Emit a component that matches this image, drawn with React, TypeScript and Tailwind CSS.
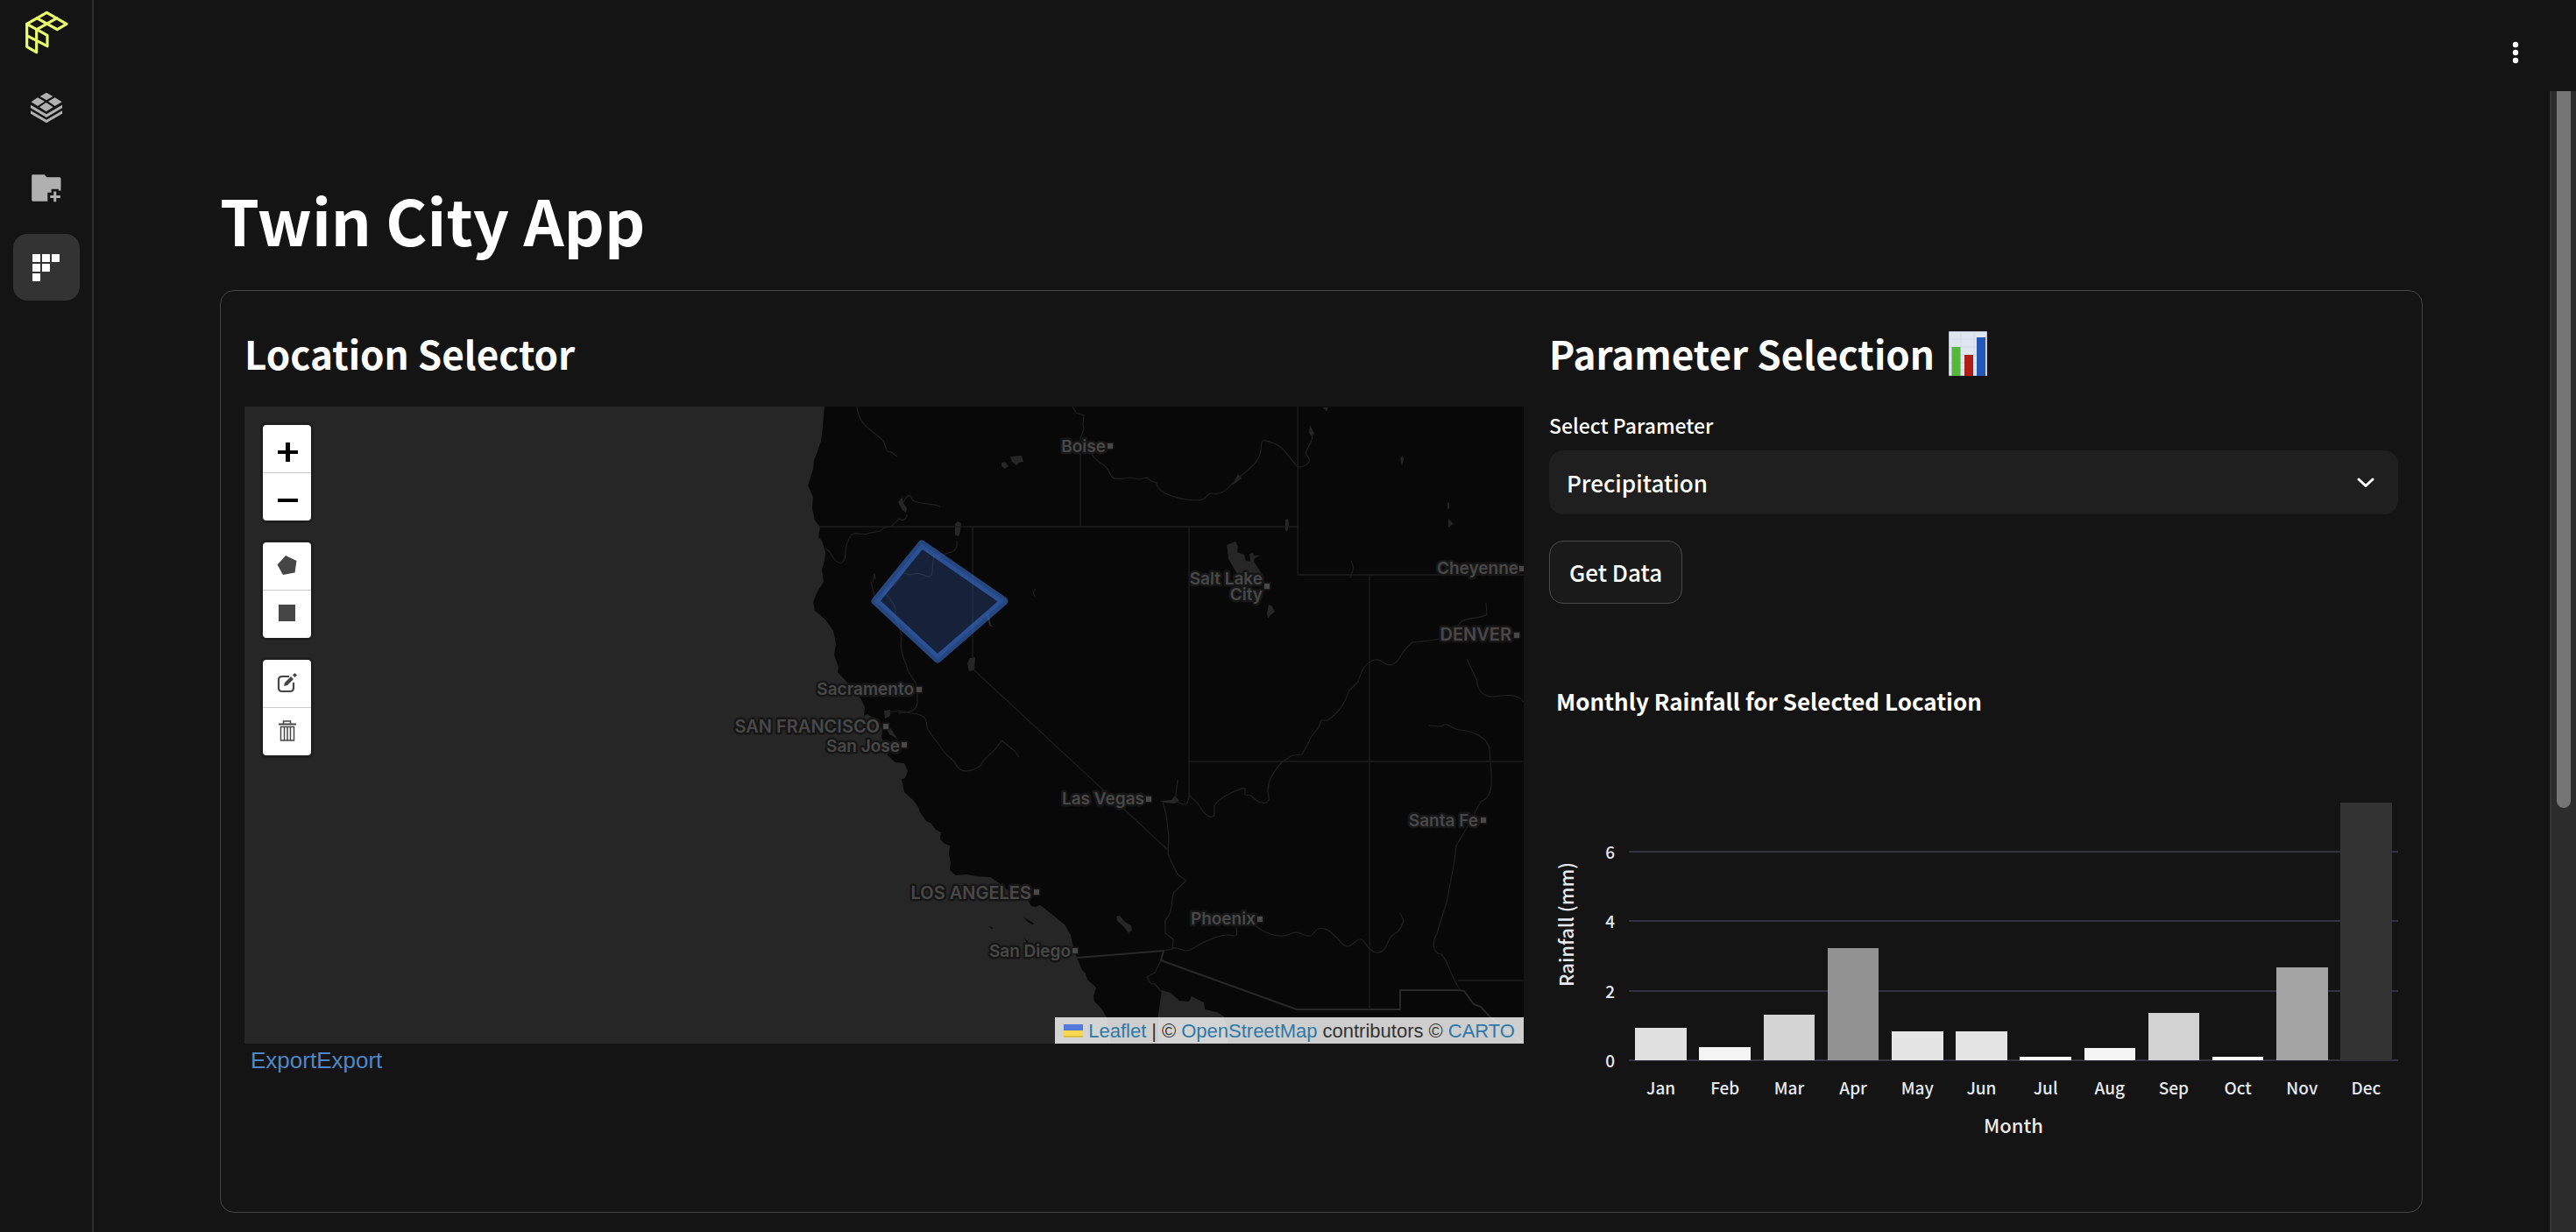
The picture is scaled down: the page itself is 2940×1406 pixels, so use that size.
import { useId, useState } from "react";

type Rain = { month: string; mm: number; fill: string };

const RAINFALL: Rain[] = [
  { month: "Jan", mm: 0.92, fill: "bg-[#e1e1e1]" },
  { month: "Feb", mm: 0.39, fill: "bg-[#f5f5f5]" },
  { month: "Mar", mm: 1.31, fill: "bg-[#d4d4d4]" },
  { month: "Apr", mm: 3.22, fill: "bg-[#929292]" },
  { month: "May", mm: 0.82, fill: "bg-[#e5e5e5]" },
  { month: "Jun", mm: 0.84, fill: "bg-[#e4e4e4]" },
  { month: "Jul", mm: 0.1, fill: "bg-[#fdfdfd]" },
  { month: "Aug", mm: 0.36, fill: "bg-[#f5f5f5]" },
  { month: "Sep", mm: 1.35, fill: "bg-[#d2d2d2]" },
  { month: "Oct", mm: 0.1, fill: "bg-[#fdfdfd]" },
  { month: "Nov", mm: 2.68, fill: "bg-[#a4a4a4]" },
  { month: "Dec", mm: 7.4, fill: "bg-[#333333]" },
];
const AXIS_MAX = 7.5;
const TICKS = [0, 2, 4, 6];
const percent = (mm: number) => `${(mm / AXIS_MAX) * 100}%`;

/* ---------- Sidebar ---------- */

function Logo() {
  return (
    <svg viewBox="84 36 150 150" className="size-[50px]" fill="none" stroke="#e8ff6b" strokeWidth="9.500" strokeLinejoin="round" strokeLinecap="round">
      <path d="M92 82 160 43 228 82 196 101 126 62M92 82 126 101 195 62" />
      <path d="M92 82V160L125 179V101M92 122 162 158V121L126 101" />
    </svg>
  );
}

function LayersIcon() {
  return (
    <svg viewBox="102 318 114 108" className="h-9 w-[38px]" fill="#b0b0b0">
      <path d="M159 320 181 333 159 346 137 333ZM129 337 153 350 129 366 107 352ZM188 337 212 352 188 366 165 350ZM158 354 182 370 158 385 135 370Z" />
      <path d="M105 362 159 394 213 362V373L159 405 105 373Z" />
      <path d="M105 382 159 413 213 382V392L159 424 105 392Z" />
    </svg>
  );
}

function FolderPlusIcon() {
  return (
    <svg viewBox="104 594 108 100" className="h-[33px] w-9" fill="#b0b0b0">
      <path d="M111 598H151L159 607H203Q208 607 208 612V653H200V648H175V660H162V690H111Q107 690 107 685V602Q107 598 111 598Z" />
      <path d="M183 656H192V670H206V679H192V692H183V679H171V670H183Z" />
    </svg>
  );
}

function BlocksIcon() {
  return (
    <svg viewBox="0 0 31 31" className="size-[31px]" fill="#fff">
      <path d="M0 0h9v9H0zM11 0h9v9h-9zM22 0h9v9h-9zM0 11h9v9H0zM11 11h9v9h-9zM0 22h9v9H0z" />
    </svg>
  );
}

function Sidebar() {
  return (
    <nav aria-label="Main" className="flex w-[107px] shrink-0 flex-col items-center border-r-2 border-[#303030] pt-3">
      <a href="#home" aria-label="Home">
        <Logo />
      </a>
      <div className="mt-[23px] flex flex-col gap-[15px]">
        <button type="button" aria-label="Layers" className="flex size-[76px] items-center justify-center rounded-2xl">
          <LayersIcon />
        </button>
        <button type="button" aria-label="New project" className="flex size-[76px] items-center justify-center rounded-2xl">
          <FolderPlusIcon />
        </button>
        <button type="button" aria-label="Apps" aria-current="page" className="flex size-[76px] items-center justify-center rounded-2xl bg-[#333333]">
          <BlocksIcon />
        </button>
      </div>
    </nav>
  );
}

/* ---------- Map ---------- */

const COAST =
  "M941 464 939 487 937 503 933 515 929 525 928 535 925 545 922 554 928 567 927 580 930 594 936 601 934 613 938 617 942 630 941 640 938 650 940 664 933 675 928 687 930 697 942 707 951 720 954 735 952 747 957 762 956 767 968 780 982 797 987 807 986 817 990 815 1000 822 1007 833 1006 842 1010 850 1013 862 1022 870 1032 871 1036 880 1033 888 1029 889 1032 904 1042 913 1048 921 1050 927 1057 937 1063 940 1068 947 1074 950 1073 958 1078 963 1084 965 1083 975 1085 985 1084 993 1091 999 1103 998 1115 1000 1130 1001 1142 1009 1155 1020 1173 1027 1177 1034 1182 1035 1187 1033 1200 1043 1215 1055 1222 1067 1224 1077 1229 1093 1235 1107 1239 1111 1241 1118 1251 1127 1248 1137 1249 1143 1257 1151 1263 1161 1268 1191H1739V464Z";

const WATER = [
  "M1326 1130 1336 1133 1346 1142 1357 1143 1360 1137 1374 1144 1375 1152 1389 1155 1397 1160 1402 1191H1322V1157L1325 1137Z",
  "M1093 595 1097 597 1096 606 1094 612 1090 611 1090 598Z",
  "M1025 573 1030 567 1031 574 1035 580 1034 585 1030 582Z",
  "M1153 521 1166 520 1168 527 1163 528 1160 531 1155 527ZM1143 528 1147 527 1151 532 1147 535 1143 532Z",
  "M1125 700 1129 702 1131 713 1134 716 1129 714Z",
  "M1107 751 1113 750 1112 765 1106 766 1104 757Z",
  "M1009 811 1016 810 1016 817 1010 820ZM1009 826 1017 832 1025 844 1015 838Z",
  "M1400 622 1410 618 1413 624 1412 630 1420 633 1422 640 1431 641 1443 659 1437 661 1430 655 1412 655 1402 638 1401 628Z",
  "M1426 632 1430 631 1431 634 1438 634 1432 637 1431 642 1427 641Z",
  "M1448 690 1452 692 1455 698 1450 702 1447 706 1446 700Z",
  "M1467 593 1470 592 1471 598 1469 607 1467 605Z",
  "M1406 554 1413 541 1417 546Z",
  "M1495 485 1500 495 1497 498 1494 494ZM1509 465H1516L1514 469Z",
  "M1652 574 1654 573 1654 581 1652 580ZM1653 592 1659 598 1653 602ZM1598 523 1601 520 1602 524 1600 532Z",
  "M1274 1046 1278 1045 1284 1052 1291 1056 1292 1061 1288 1065 1282 1057 1275 1051Z",
  "M1324 914 1337 913 1341 908 1346 914 1340 917 1329 916Z",
];

const RIVERS = [
  "M978 464C980 490 1005 495 1009 505S1010 515 1017 516L1024 521",
  "M1224 464 1228 471 1237 474 1236 485 1237 490 1233 500V518",
  "M1246 518C1252 530 1262 528 1266 539S1278 546 1290 545L1300 547 1309 545 1314 549 1320 551C1320 564 1350 571 1365 571S1376 561 1384 563 1399 561 1406 552L1427 534C1445 518 1437 504 1441 503S1462 507 1467 516L1481 533C1490 533 1497 528 1493 521 1485 516 1499 507 1498 495",
  "M1073 578C1060 573 1042 576 1040 568S1030 573 1031 575M1035 587C1035 593 1030 595 1026 592L1018 600 1008 603C1004 609 995 606 990 609S978 606 972 610C960 625 970 638 959 643 948 640 950 627 941 626",
  "M1092 617C1094 633 1082 630 1066 635 1063 645 1066 657 1061 658S1051 652 1043 655 1035 652 1030 655 1024 669 1018 669L1010 677C1028 695 1020 700 1022 704L1029 724C1026 750 1033 750 1036 765 1043 778 1046 775 1047 790V803C1045 812 1037 813 1025 814",
  "M1001 692 994 664M996 664 998 655 999 661",
  "M1015 813 1025 811 1040 814C1062 817 1055 822 1059 833L1079 860 1090 870C1095 885 1110 880 1119 874 1125 860 1132 864 1143 845L1158 857 1163 864",
  "M1344 890 1341 914 1350 918 1354 918 1358 908 1368 918C1375 932 1384 935 1386 930V920C1390 910 1418 898 1421 900V907L1428 908C1438 920 1450 918 1448 909 1444 895 1453 880 1464 869L1475 862 1486 861 1492 850 1497 840 1505 830 1508 822H1515C1527 814 1532 806 1535 800L1540 788 1550 778C1555 762 1560 755 1569 753S1581 762 1590 758 1595 748 1612 733C1625 732 1645 730 1655 725L1667 710C1675 703 1690 707 1697 701L1696 688",
  "M1327 915 1331 930 1334 955 1333 975 1344 998 1354 1005 1340 1018C1335 1030 1340 1040 1330 1050V1065L1339 1072 1338 1083 1328 1085",
  "M1338 1083C1344 1078 1350 1090 1362 1082S1390 1068 1400 1067 1413 1074 1411 1058M1432 1056C1450 1070 1465 1070 1475 1065S1492 1075 1500 1064 1520 1063 1530 1075 1545 1073 1552 1072 1560 1087 1572 1087 1583 1069 1591 1066 1602 1050 1602 1050L1598 1042",
  "M1674 752 1686 777C1685 788 1695 796 1705 795S1730 790 1739 801",
  "M1630 828 1645 829C1652 822 1655 832 1666 833S1702 840 1700 860L1701 870C1704 900 1702 910 1690 915 1684 925 1680 935 1674 945L1662 965C1660 990 1655 1005 1653 1020S1642 1055 1640 1066C1634 1075 1635 1088 1645 1089 1655 1100 1655 1115 1667 1130",
  "M1542 640 1545 648 1541 659M1182 672 1179 676 1181 681",
  "M1325 1096 1318 1110 1309 1115 1313 1122 1318 1123 1326 1132",
];

const STATES =
  "M936 601H1481M1233 518V601M1110 601V750M1112 765 1333 970M1357 601V910M1481 464V656H1739M1563 656V1152M1357 869H1739M1664 1119H1739";
const NATIONAL =
  "M1229 1093 1328 1085 1325 1096 1480 1152H1598V1130H1664L1671 1131 1682 1146 1690 1149 1700 1160 1739 1191";

type City = { name: string; x: number; y: number; dot: [number, number]; major?: boolean };
const CITIES: City[] = [
  { name: "Boise", x: 1262, y: 516, dot: [1267, 509] },
  { name: "Sacramento", x: 1043, y: 793, dot: [1049, 787] },
  { name: "SAN FRANCISCO", x: 1004, y: 836, dot: [1011, 829], major: true },
  { name: "San Jose", x: 1027, y: 858, dot: [1032, 850] },
  { name: "LOS ANGELES", x: 1177, y: 1026, dot: [1183, 1018], major: true },
  { name: "San Diego", x: 1222, y: 1092, dot: [1227, 1085] },
  { name: "Las Vegas", x: 1306, y: 918, dot: [1311, 912] },
  { name: "Santa Fe", x: 1687, y: 943, dot: [1693, 936] },
  { name: "Phoenix", x: 1433, y: 1055, dot: [1438, 1049] },
  { name: "Salt Lake", x: 1441, y: 667, dot: [1446, 669] },
  { name: "City", x: 1441, y: 685, dot: [1446, 669] },
  { name: "Cheyenne", x: 1733, y: 655, dot: [1737, 649] },
  { name: "DENVER", x: 1725, y: 731, dot: [1731, 725], major: true },
];

function BaseMap() {
  return (
    <svg viewBox="279 464 1460 727" preserveAspectRatio="xMaxYMin slice" className="block size-full" role="img" aria-label="Map of the western United States">
      <path d={COAST} fill="#080808" />
      <path d="M1168 1047 1174 1050 1180 1054 1178 1055 1173 1052ZM1128 1057 1134 1059 1132 1060ZM1168 1069 1174 1076 1172 1076Z" fill="#080808" />
      {WATER.map((d) => (
        <path key={d} d={d} fill="#262626" />
      ))}
      <g fill="none" strokeLinejoin="round">
        {RIVERS.map((d) => (
          <path key={d} d={d} stroke="#202020" strokeWidth="1.2" />
        ))}
        <path d={STATES} stroke="#1c1c1c" strokeWidth="1.4" />
        <path d={NATIONAL} stroke="#282828" strokeWidth="2" />
      </g>
      <path d="M1052 621 1146 686 1070 752 999 686Z" fill="#3a6fd0" fillOpacity="0.25" stroke="#3a6fd0" strokeOpacity="0.6" strokeWidth="9" strokeLinejoin="round" />
      {CITIES.map((c) => (
        <g key={c.name} fill="#484848">
          <text
            x={c.x}
            y={c.y}
            textAnchor="end"
            stroke="#161616"
            strokeWidth="5"
            strokeLinejoin="round"
            paintOrder="stroke"
            className={c.major ? "font-['Inter',sans-serif] text-[20px] font-semibold" : "font-['Inter',sans-serif] text-[19px] font-semibold"}
          >
            {c.name}
          </text>
          <rect x={c.dot[0] - 3} y={c.dot[1] - 3} width="6" height="6" stroke="#161616" strokeWidth="3" paintOrder="stroke" />
        </g>
      ))}
    </svg>
  );
}

type Tool = { label: string; icon: React.ReactNode };
const icon = (body: React.ReactNode) => (
  <svg viewBox="0 0 24 24" className="size-6 overflow-visible" fill="#464646">
    {body}
  </svg>
);

const ZOOM: Tool[] = [
  { label: "Zoom in", icon: icon(<path d="M1 14H10V5H15V14H24V18H15V27H10V18H1Z" fill="#000" />) },
  { label: "Zoom out", icon: icon(<path d="M1 14H24V18H1Z" fill="#000" />) },
];
const DRAW: Tool[] = [
  { label: "Draw a polygon", icon: icon(<path d="M10 0 22.500 6 20.500 19.500 7 22 .5 10.500Z" />) },
  { label: "Draw a rectangle", icon: icon(<path d="M2 1H21V20H2Z" />) },
];
const EDIT: Tool[] = [
  {
    label: "Edit layers",
    icon: icon(
      <>
        <path d="M14 4H6Q2 4 2 8V17Q2 21 6 21H15Q19 21 19 17V11" fill="none" stroke="#464646" strokeWidth="2.200" />
        <path d="M8 15 9 11 16 4 19 7 12 14ZM18 2.500 20.500 0 23 2.500 20.500 5Z" />
      </>,
    ),
  },
  {
    label: "Delete layers",
    icon: icon(
      <g fill="none" stroke="#464646">
        <path d="M2 3.500H22" strokeWidth="2" />
        <path d="M7.500 3V0H15.500V3" strokeWidth="1.500" />
        <path d="M4.500 6.500H19.500V22H4.500ZM8.500 7V22M12 7V22M15.500 7V22" strokeWidth="1.500" />
      </g>,
    ),
  },
];

function ToolGroup({ tools }: { tools: Tool[] }) {
  return (
    <div className="flex w-[55px] flex-col divide-y divide-[#cccccc] overflow-hidden rounded bg-white outline-[3px] outline-black/20">
      {tools.map((t) => (
        <button key={t.label} type="button" aria-label={t.label} className="flex h-[55px] items-center justify-center last:h-[54px]">
          {t.icon}
        </button>
      ))}
    </div>
  );
}

function Attribution() {
  return (
    <div className="absolute right-0 bottom-0 flex h-[30px] items-center gap-[6px] bg-white/80 pr-[10px] pl-[10px] font-['Liberation_Sans',Arial,sans-serif] text-[22px] text-[#333333]">
      <a href="https://leafletjs.com" className="flex items-center gap-[6px] text-[#2f79a8]">
        <svg viewBox="0 0 22 15" className="h-[15px] w-[22px]">
          <path fill="#5379dc" d="M0 0h22v7H0z" />
          <path fill="#fad74c" d="M0 7h22v8H0z" />
          <path fill="#dcbf42" d="M0 13h22v2H0z" />
        </svg>
        Leaflet
      </a>
      <span>|</span>
      <span>©</span>
      <a href="https://www.openstreetmap.org/copyright" className="text-[#2f79a8]">
        OpenStreetMap
      </a>
      <span>contributors ©</span>
      <a href="https://carto.com/attributions" className="text-[#2f79a8]">
        CARTO
      </a>
    </div>
  );
}

function LocationSelector() {
  return (
    <section className="min-w-0 pt-4">
      <h2 className="text-[44px] leading-[56px] font-bold">Location Selector</h2>
      <div className="relative mt-[33px] h-[727px] overflow-hidden bg-[#262626]">
        <BaseMap />
        <div className="absolute top-[21px] left-[21px] flex flex-col gap-[25px]">
          <ToolGroup tools={ZOOM} />
          <ToolGroup tools={DRAW} />
          <ToolGroup tools={EDIT} />
        </div>
        <Attribution />
      </div>
      <p className="pt-1 pl-[7px] font-['Liberation_Sans',Arial,sans-serif] text-[26px] leading-[30px] text-[#5087c7]">
        <a href="#export">Export</a>
        <a href="#export">Export</a>
      </p>
    </section>
  );
}

/* ---------- Parameters ---------- */

function ChartEmoji() {
  return (
    <svg viewBox="0 0 44 51" className="h-[51px] w-11" aria-hidden="true">
      <path fill="#dfe6f0" stroke="#b9c0cc" d="M.5.5h43v50H.5z" />
      <path stroke="#c9d6e8" strokeWidth="1" d="M1 9h42M1 18h42M1 27h42M1 36h42M1 44h42M14 1v49M29 1v49" opacity=".6" />
      <path fill="#55b83c" d="M3.500 18h10v33h-10z" />
      <path fill="#ad1f16" d="M18 27h10v24H18z" />
      <path fill="#2557b8" d="M32 7h10v44H32z" />
    </svg>
  );
}

function RainfallChart() {
  return (
    <figure className="mt-[91px] pb-[55px]">
      <figcaption className="pl-2 text-[26px] leading-10 font-bold">Monthly Rainfall for Selected Location</figcaption>
      <div className="mt-[92px] flex text-[#e6eaf1]">
        <div className="flex h-[298px] w-[91px] shrink-0 items-center justify-start pb-3">
          <span className="rotate-180 text-[22px] leading-9 [writing-mode:vertical-rl]">Rainfall (mm)</span>
        </div>
        <div className="min-w-0 flex-1">
          <div className="relative h-[298px]">
            {TICKS.map((t) => (
              <div key={t} className="absolute inset-x-0 flex h-0 items-center" style={{ bottom: percent(t) }}>
                <span className="absolute right-full pr-4 text-[19px] leading-7">{t}</span>
                <span className="h-[2px] w-full shrink-0 bg-[#31333f]" />
              </div>
            ))}
            <div className="relative flex h-full items-end">
              {RAINFALL.map((r) => (
                <div key={r.month} className="flex h-full flex-1 items-end justify-center">
                  <div className={`w-4/5 ${r.fill}`} style={{ height: percent(r.mm) }} />
                </div>
              ))}
            </div>
          </div>
          <div className="mt-4 flex text-[19px] leading-[30px]">
            {RAINFALL.map((r) => (
              <span key={r.month} className="flex-1 text-center">
                {r.month}
              </span>
            ))}
          </div>
          <p className="mt-[9px] text-center text-[22px] leading-9">Month</p>
        </div>
      </div>
    </figure>
  );
}

function ParameterSelection() {
  const id = useId();
  const [parameter, setParameter] = useState("Precipitation");
  return (
    <section className="min-w-0 pt-4 font-medium">
      <h2 className="flex items-center gap-4 text-[44px] leading-[56px] font-bold">
        Parameter Selection
        <ChartEmoji />
      </h2>
      <label htmlFor={id} className="mt-9 block text-[23px] leading-9">
        Select Parameter
      </label>
      <div className="relative mt-[11px]">
        <select
          id={id}
          value={parameter}
          onChange={(e) => setParameter(e.target.value)}
          className="block h-[73px] w-full appearance-none rounded-2xl bg-[#1f1f1f] px-5 text-[26px] leading-10"
        >
          <option>Precipitation</option>
          <option>Temperature</option>
        </select>
        <svg viewBox="0 0 20 12" className="pointer-events-none absolute top-[31px] right-[27px] h-3 w-5" fill="none" stroke="#fff" strokeWidth="3" strokeLinecap="round" strokeLinejoin="round">
          <path d="M2 2 10 9.500 18 2" />
        </svg>
      </div>
      <button type="button" className="mt-[30px] block h-[72px] rounded-2xl border border-[#4a4a4a] bg-[#1a1a1a] px-[22px] text-[26px] leading-10">
        Get Data
      </button>
      <RainfallChart />
    </section>
  );
}

/* ---------- Page ---------- */

export default function App() {
  return (
    <div className="flex h-screen overflow-hidden bg-[#141414] font-['Noto_Sans_CJK_SC',sans-serif] text-white">
      <Sidebar />
      <div className="flex min-w-0 flex-1 flex-col">
        <header className="flex h-[104px] shrink-0 items-start justify-end pt-[42px] pr-[51px]">
          <button type="button" aria-label="Menu" className="flex h-9 w-9 items-center justify-center">
            <svg viewBox="0 0 8 26" className="h-[26px] w-2" fill="#fff">
              <circle cx="4" cy="4" r="3.200" />
              <circle cx="4" cy="13" r="3.200" />
              <circle cx="4" cy="22" r="3.200" />
            </svg>
          </button>
        </header>
        <div className="flex min-h-0 flex-1">
          <main className="min-w-0 flex-1 overflow-hidden pt-[98px] pr-[145px] pl-36">
            <h1 className="text-[72px] leading-[96px] font-bold">Twin City App</h1>
            <div className="mt-[33px] grid grid-cols-[1460fr_969fr] gap-[29px] rounded-2xl border border-[#444444] p-[27px]">
              <LocationSelector />
              <ParameterSelection />
            </div>
          </main>
          <div className="w-[30px] shrink-0 border-l-2 border-[#363636] bg-[#2c2c2c] pr-[6px] pl-[6px]">
            <div className="h-[818px] rounded-b-full bg-[#757575]" />
          </div>
        </div>
      </div>
    </div>
  );
}
